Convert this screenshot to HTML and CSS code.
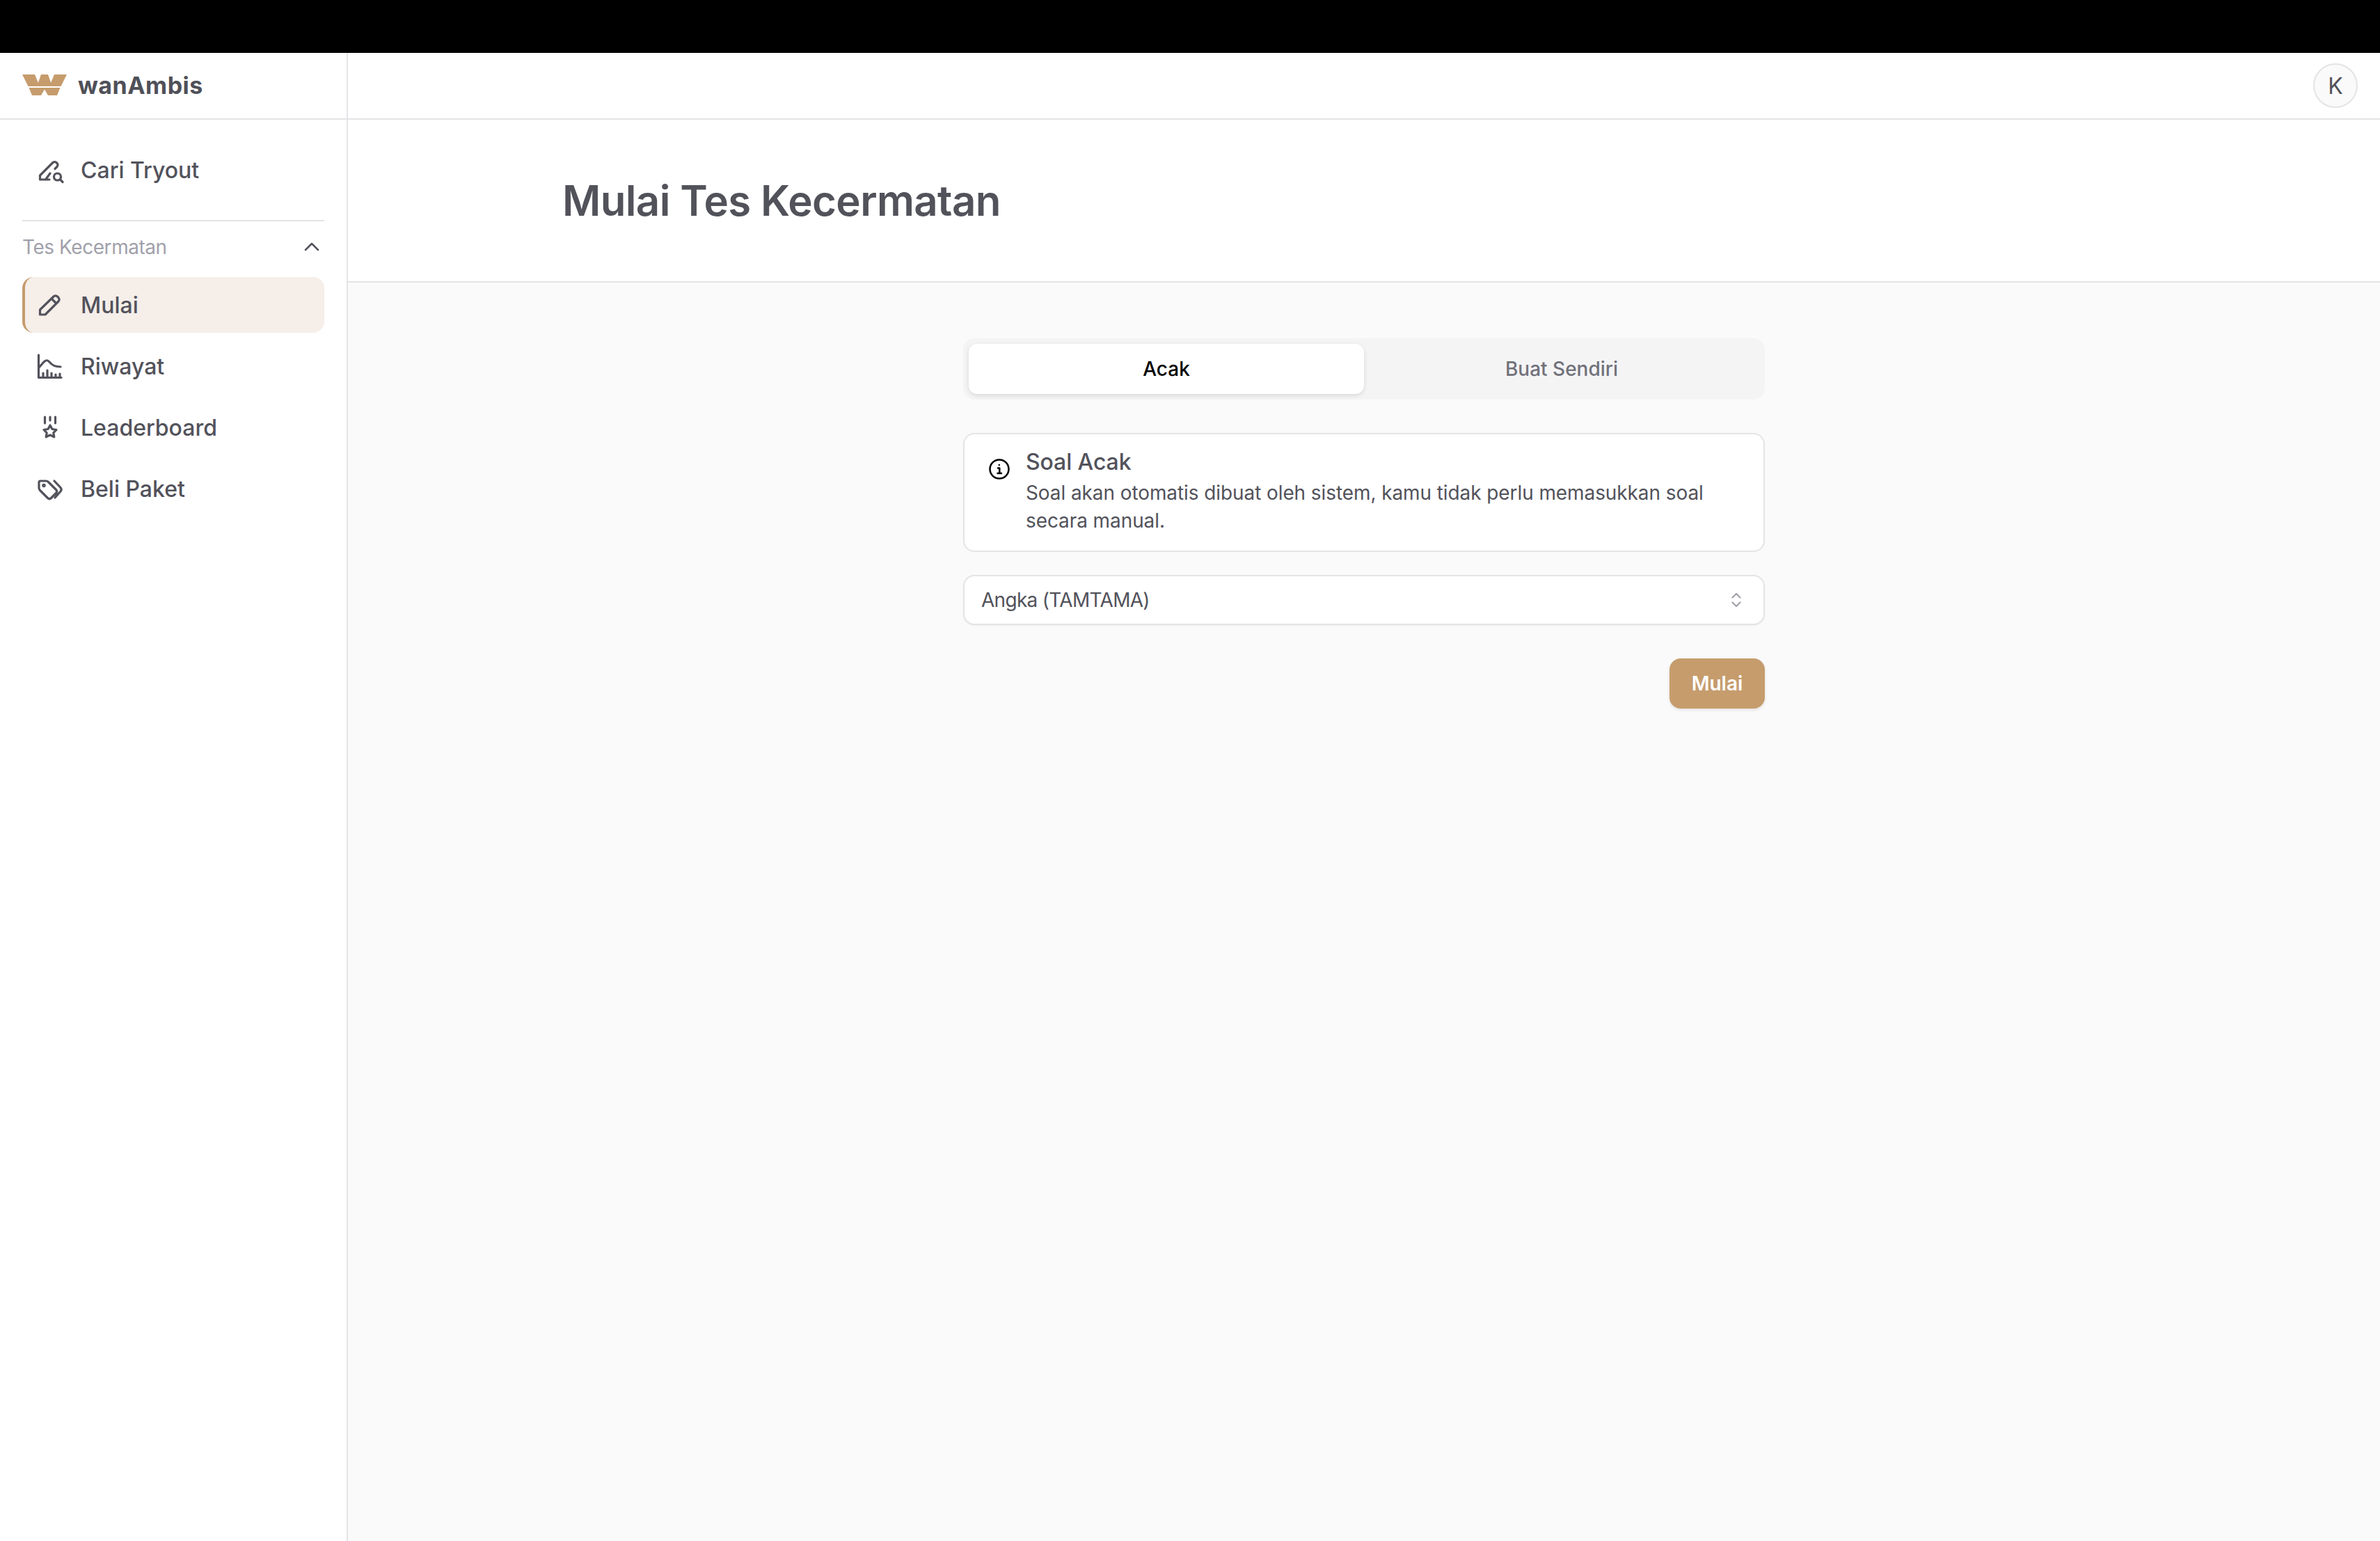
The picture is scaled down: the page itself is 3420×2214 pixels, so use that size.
FILE: index.html
```html
<!DOCTYPE html>
<html lang="id">
<head>
<meta charset="utf-8">
<title>Mulai Tes Kecermatan</title>
<link rel="stylesheet" href="styles.css">
</head>
<body>
<div class="topbar"></div>
<div class="app">
  <aside class="sidebar">
    <div class="brand">
      <svg class="logo" viewBox="0 0 64 30" aria-hidden="true">
        <path d="M0 0H18L25 17H8.500Z"/>
        <path d="M27 0H37L43 17H21Z"/>
        <path d="M46 0H64L55.500 17H39Z"/>
        <path d="M9.500 19H54.500L50 30H37L32 21.500L27 30H14Z"/>
      </svg>
      <span class="brand-name">wanAmbis</span>
    </div>
    <nav class="nav">
      <a class="nav-item">
        <svg class="nav-icon" viewBox="0 0 40 40"><path d="M19 34H5.500V28L24 9.500a4.300 4.300 0 0 1 6 6L27 18.500M20 25l-6.500 9"/><circle cx="30.500" cy="30" r="5"/><path d="M34.500 34l3.500 3.500"/></svg>
        <span>Cari Tryout</span>
      </a>
      <div class="nav-divider"></div>
      <div class="nav-group">
        <span>Tes Kecermatan</span>
        <svg class="chevron" viewBox="0 0 24 24"><path d="M3 16L12 7l9 9"/></svg>
      </div>
      <div class="nav-list">
        <a class="nav-item active">
          <svg class="nav-icon" viewBox="0 0 40 40"><path d="M5.500 34v-7L25 8a4 4 0 0 1 5.500 0l1.500 1.500a4 4 0 0 1 0 5.500L13 34zM22 11l7 7"/></svg>
          <span>Mulai</span>
        </a>
        <a class="nav-item">
          <svg class="nav-icon" viewBox="0 0 40 40"><path d="M3.500 4v32.500h32.500M4 22l7-8c3-3 5.500-3 8 0 4 5 8 7 16 7M10 30v6M16 26v10M22 30v6M28 32v4M34 31v5"/></svg>
          <span>Riwayat</span>
        </a>
        <a class="nav-item">
          <svg class="nav-icon" viewBox="0 0 40 40"><path d="M12.500 5v9M20 5v5M27.500 5v9M20 17l3 5.500 6 1-4.200 4.300 1 6L20 31l-5.800 2.800 1-6L11 23.500l6-1z"/></svg>
          <span>Leaderboard</span>
        </a>
        <a class="nav-item">
          <svg class="nav-icon" viewBox="0 0 40 40"><path d="M4 11v8c0 1.500.5 2.500 1.500 3.500l11 11c1.500 1.500 3.500 1.500 5 0l7-7c1.500-1.500 1.500-3.500 0-5l-11-11C16.500 9.500 15.500 9 14 9H6c-1.500 0-2 .8-2 2zM26 9l9 9.500c1.500 1.800 1.500 3.700 0 5.500l-8 9"/><circle cx="11" cy="15.500" r="1.200"/></svg>
          <span>Beli Paket</span>
        </a>
      </div>
    </nav>
  </aside>
  <main class="main">
    <header class="header">
      <div class="avatar">K</div>
    </header>
    <section class="page-head">
      <h1 class="page-title">Mulai Tes Kecermatan</h1>
    </section>
    <section class="content">
      <div class="form">
        <div class="tabs">
          <button class="tab selected">Acak</button>
          <button class="tab">Buat Sendiri</button>
        </div>
        <div class="alert">
          <svg class="alert-icon" viewBox="0 0 32 32"><circle cx="16" cy="16" r="13.500"/><path d="M14 14.500h2.300V22M13.500 22h5.500"/><circle class="dot" cx="15.800" cy="10" r="1.300"/></svg>
          <div class="alert-body">
            <div class="alert-title">Soal Acak</div>
            <p class="alert-text">Soal akan otomatis dibuat oleh sistem, kamu tidak perlu memasukkan soal secara manual.</p>
          </div>
        </div>
        <div class="select">
          <span>Angka (TAMTAMA)</span>
          <svg class="updown" viewBox="0 0 14 22"><path d="M1.500 7.500L7 2l5.500 5.500M1.500 14.500L7 20l5.500-5.500"/></svg>
        </div>
        <div class="actions">
          <button class="submit">Mulai</button>
        </div>
      </div>
    </section>
  </main>
</div>
</body>
</html>
```

FILE: styles.css
```css
* { box-sizing: border-box; }
html, body { margin: 0; height: 100%; }
body {
  font-family: Inter, "Liberation Sans", sans-serif;
  color: #52525b;
  background: #fff;
  display: flex;
  flex-direction: column;
  height: 100vh;
  overflow: hidden;
}
.topbar { height: 76px; background: #000; flex: none; }
.app { flex: 1; display: flex; min-height: 0; }

.sidebar { width: 500px; flex: none; border-right: 2px solid #e4e4e7; background: #fff; }
.brand {
  height: 96px;
  border-bottom: 2px solid #e4e4e7;
  padding: 0 32px;
  display: flex;
  align-items: center;
  gap: 16px;
}
.logo { width: 64px; height: 30px; fill: #c69c6d; display: block; margin-top: -2px; }
.brand-name { font-size: 34px; font-weight: 700; letter-spacing: .5px; color: #4f5058; margin-top: -2px; }

.nav { padding: 32px 32px; }
.nav-item {
  height: 80px;
  display: flex;
  align-items: center;
  gap: 24px;
  padding-left: 20px;
  border-radius: 16px;
  font-size: 32px;
  font-weight: 500;
  color: #52525b;
}
.nav-icon { width: 40px; height: 40px; fill: none; stroke: #52525b; stroke-width: 3.200; stroke-linecap: round; stroke-linejoin: round; flex: none; }
.nav-divider { height: 2px; background: #e4e4e7; margin-top: 32px; }
.nav-group {
  height: 80px;
  padding: 0 6px 6px 0;
  display: flex;
  align-items: center;
  justify-content: space-between;
  font-size: 28px;
  letter-spacing: -.45px;
  color: #a1a1aa;
}
.chevron { width: 24px; height: 24px; fill: none; stroke: #52525b; stroke-width: 2.500; stroke-linecap: round; stroke-linejoin: round; }
.nav-list { display: flex; flex-direction: column; gap: 8px; }
.nav-item.active { background: #f5eee9; border-left: 4px solid #c69c6d; padding-left: 16px; }

.main { flex: 1; display: flex; flex-direction: column; min-width: 0; background: #fafafa; }
.header {
  height: 96px;
  flex: none;
  background: #fff;
  border-bottom: 2px solid #e4e4e7;
  display: flex;
  align-items: center;
  justify-content: flex-end;
  padding: 0 32px;
}
.avatar {
  width: 64px;
  height: 64px;
  border-radius: 50%;
  border: 2px solid #e4e4e7;
  background: #fafafa;
  display: flex;
  align-items: center;
  justify-content: center;
  font-size: 32px;
  color: #52525b;
}
.page-head { height: 234px; flex: none; background: #fff; border-bottom: 2px solid #e4e4e7; display: flex; align-items: center; justify-content: center; }
.page-title { width: 2304px; margin: 0; font-size: 60px; font-weight: 600; letter-spacing: -.65px; color: #52525b; line-height: 1.2; }
.content { flex: 1; display: flex; justify-content: center; padding-top: 80px; }
.form { width: 1152px; display: flex; flex-direction: column; }
.tabs { height: 88px; padding: 8px; background: #f4f4f5; border-radius: 16px; display: flex; }
.tab {
  flex: 1;
  border: 0;
  background: transparent;
  font: 500 28px Inter, "Liberation Sans", sans-serif;
  color: #71717a;
  border-radius: 12px;
  padding: 0;
}
.tab.selected { background: #fff; color: #000; box-shadow: 0 2px 6px rgba(0,0,0,.12); }
.alert {
  margin-top: 48px;
  height: 171px;
  background: #fff;
  border: 2px solid #e4e4e7;
  border-radius: 16px;
  padding: 20px 32px 20px 34px;
  display: flex;
  gap: 22px;
}
.alert-icon { width: 32px; height: 32px; margin-top: 14px; flex: none; fill: none; stroke: #000; stroke-width: 2.500; stroke-linecap: round; stroke-linejoin: round; }
.alert-icon .dot { fill: #000; stroke: none; }
.alert-title { font-size: 32px; font-weight: 500; line-height: 40px; letter-spacing: -.1px; color: #52525b; }
.alert-text { margin: 4px 0 0; font-size: 28px; line-height: 40px; letter-spacing: -.09px; color: #52525b; }
.select {
  margin-top: 33px;
  height: 72px;
  background: #fff;
  border: 2px solid #e4e4e7;
  border-radius: 16px;
  padding: 0 32px 0 24px;
  display: flex;
  align-items: center;
  justify-content: space-between;
  font-size: 28px;
  letter-spacing: -.7px;
  color: #52525b;
  box-shadow: 0 1px 2px rgba(0,0,0,.05);
}
.updown { width: 14px; height: 22px; fill: none; stroke: #a1a1aa; stroke-width: 2.200; stroke-linecap: round; stroke-linejoin: round; }
.actions { display: flex; justify-content: flex-end; margin-top: 48px; }
.submit {
  height: 72px;
  width: 137px;
  border: 0;
  border-radius: 16px;
  background: #c69c6d;
  color: #fff;
  font: 600 28px Inter, "Liberation Sans", sans-serif;
  padding: 0;
  box-shadow: 0 2px 4px rgba(0,0,0,.1);
}
```
